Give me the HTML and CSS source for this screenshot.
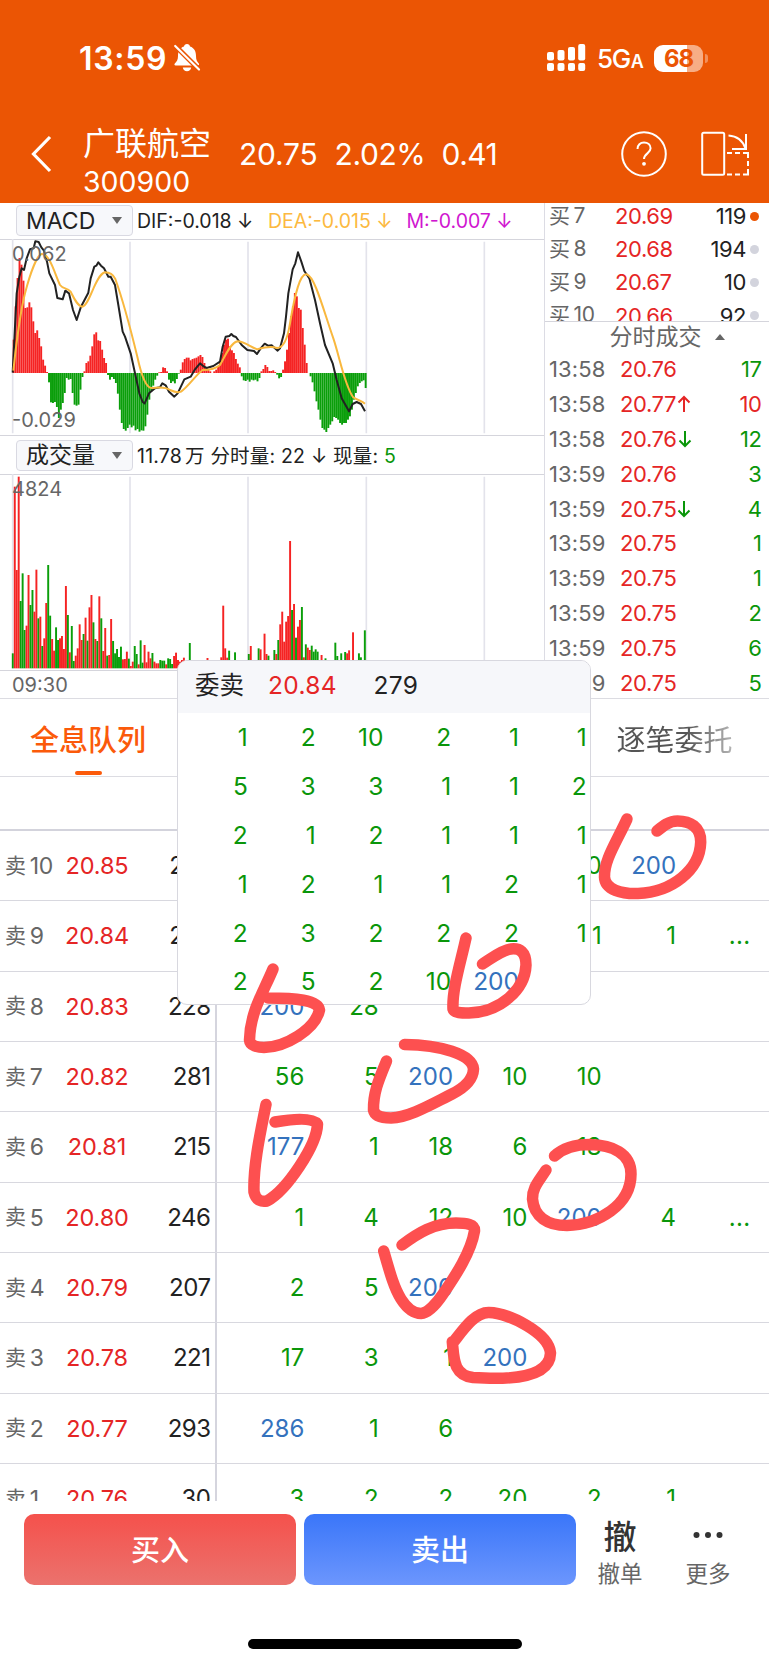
FILE: index.html
```html
<!DOCTYPE html>
<html lang="zh-CN">
<head>
<meta charset="utf-8">
<title>广联航空 300900</title>
<link rel="stylesheet" href="styles.css">
</head>
<body>
<div class="phone">
  <header class="header">
    <div class="status">
      <span class="clock">13:59</span>
      <svg class="bell" width="28" height="30" viewBox="0 0 28 30"><path fill="#fff" d="M14 1c1.700 0 2.800 1 3 2.500 4.300 1.300 6 5 6 9.500 0 4 1 5.500 2.800 7.500.8 1-.2 2-1 2H2.600c-1 0-1.600-1-.8-2C3.800 18.500 5 17 5 13c0-4.500 1.700-8.200 6-9.500C11.200 2 12.300 1 14 1z"/><path fill="#fff" d="M9.800 24.500h8.400c-.5 2.500-2 3.700-4.200 3.700s-3.700-1.200-4.200-3.700z"/><path d="M2.500 3 26 26.500" stroke="#eb5504" stroke-width="5"/><path d="M2.200 3 26 26.500" stroke="#fff" stroke-width="2.200" stroke-linecap="round"/></svg>
      <svg class="signal" width="39" height="28" viewBox="0 0 39 28" fill="#fff"><rect y="8" width="7" height="8.500" rx="2"/><rect x="10.500" y="6" width="7" height="10.500" rx="2"/><rect x="21" y="3" width="7" height="13.500" rx="2"/><rect x="31.200" width="7" height="16.500" rx="2"/><rect y="19" width="7" height="8" rx="2"/><rect x="10.500" y="19" width="7" height="8" rx="2"/><rect x="21" y="19" width="7" height="8" rx="2"/><rect x="31.200" y="19" width="7" height="8" rx="2"/></svg>
      <span class="net">5G<small>A</small></span>
      <span class="battery">68</span><i class="nub"></i>
    </div>
    <div class="titlebar">
      <svg class="back" width="22" height="38" viewBox="0 0 22 38"><path d="M20 2 3.500 19 20 36" fill="none" stroke="#fff" stroke-width="3.200"/></svg>
      <div class="stock"><span class="name">广联航空</span><span class="code">300900</span></div>
      <span class="quote price-now">20.75</span><span class="quote pct">2.02%</span><span class="quote chg">0.41</span>
      <svg class="help" width="46" height="46" viewBox="0 0 46 46" fill="none" stroke="#fff" stroke-width="2"><circle cx="23" cy="23" r="21.800"/><path d="M16.500 18c0-4.200 2.800-6.500 6.500-6.500s6.600 2.300 6.600 5.800c0 5-6.600 5.200-6.600 10.700"/><circle cx="23" cy="32.800" r="1.900" fill="#fff" stroke="none"/></svg>
      <svg class="rotate" width="48" height="46" viewBox="0 0 48 46" fill="none" stroke="#fff" stroke-width="2"><rect x="1.200" y="1.700" width="22" height="42" rx="1.500"/><path d="M27.500 4.500C35 5 41.500 9 44.500 17.500M45 3v15H31"/><path d="M26 22h5m3 0h5m3 0h5v5m0 3v5m0 3v5.500h-5m-3 0h-5m-3 0h-5"/></svg>
    </div>
  </header>

  <section class="market">
    <div class="charts">
      <div class="info">
        <span class="picker">MACD<i class="down"></i></span>
        <span class="dif">DIF:-0.018 ↓</span><span class="dea">DEA:-0.015 ↓</span><span class="m">M:-0.007 ↓</span>
      </div>
      <div class="plot macd">
        <svg width="544" height="197" viewBox="0 117 1632 591">
          <path class="grid" d="M38 117V700M390 125V700M744 125V700M1099 125V700M1453 125V700"/>
          <g id="hist"></g>
          <path class="dif-line" d="M38 518 44 400 50 280 58 230 65 205 72 210 80 175 90 148 101 145 106 124 116 126 124 142 132 152 141 185 148 220 165 255 172 294 188 298 196 272 207 280 219 330 230 360 243 320 265 278 272 235 283 200 289 197 295 187 303 197 312 205 325 230 332 230 345 255 355 315 368 395 375 410 392 460 405 520 418 580 428 606 434 610 447 580 465 565 480 562 487 550 497 556 507 575 523 590 533 580 553 538 572 530 585 508 600 490 612 500 620 504 640 498 660 485 668 440 677 410 688 408 694 402 700 408 708 411 725 435 742 450 762 453 771 462 782 445 794 431 804 437 815 436 833 452 840 445 852 400 858 350 865 280 878 208 886 190 894 157 904 185 913 213 928 235 945 300 960 370 975 435 998 490 1010 540 1025 595 1047 634 1058 612 1070 606 1083 612 1095 634"/>
          <path class="dea-line" d="M40 512C50 420 60 340 75 280 92 215 112 165 125 162 150 160 165 225 180 255 190 268 200 262 212 275 222 295 232 318 247 320 270 315 285 225 315 217 330 217 340 225 346 237 365 290 390 380 412 470 425 530 440 568 458 564 475 562 495 560 510 570 525 577 535 578 543 575 565 560 590 522 608 510 630 510 650 504 660 495 675 470 690 430 712 424 735 425 750 440 772 448 790 443 815 438 830 444 850 445 862 420 870 370 885 280 900 220 920 223 945 230 970 330 1000 415 1020 475 1035 560 1060 592 1075 602 1085 602 1095 611"/>
        </svg>
        <span class="scale top">0.062</span><span class="scale bottom">-0.029</span>
      </div>
      <div class="info second">
        <span class="picker">成交量<i class="down"></i></span>
        <span class="vol-info">11.78<b>万</b> 分时量: 22 ↓ 现量: <em>5</em></span>
      </div>
      <div class="plot volume">
        <svg width="544" height="196" viewBox="0 132 1632 588">
          <path class="grid" d="M38 132V715M390 140V715M744 140V715M1099 140V715M1453 140V715"/>
          <g id="bars"></g>
        </svg>
        <span class="scale top">4824</span>
      </div>
      <div class="axis">09:30</div>
    </div>
    <div class="depth">
      <div class="bids">
        <div class="bid"><span>买<u>7</u></span><b>20.69</b><em>119</em><i class="hot"></i></div>
        <div class="bid"><span>买<u>8</u></span><b>20.68</b><em>194</em><i></i></div>
        <div class="bid"><span>买<u>9</u></span><b>20.67</b><em>10</em><i></i></div>
        <div class="bid"><span>买<u>10</u></span><b>20.66</b><em>92</em><i></i></div>
      </div>
      <div class="trades-title">分时成交<i class="up"></i></div>
      <div class="trades">
        <div class="trade"><span>13:58</span><b>20.76</b><em>17</em></div>
        <div class="trade"><span>13:58</span><b>20.77<svg class="arr red" width="14" height="18" viewBox="0 0 14 18"><path d="M7 17V2M1.500 7.500 7 2l5.500 5.500"/></svg></b><em class="red">10</em></div>
        <div class="trade"><span>13:58</span><b>20.76<svg class="arr" width="14" height="18" viewBox="0 0 14 18"><path d="M7 1v15M1.500 10.500 7 16l5.500-5.500"/></svg></b><em>12</em></div>
        <div class="trade"><span>13:59</span><b>20.76</b><em>3</em></div>
        <div class="trade"><span>13:59</span><b>20.75<svg class="arr" width="14" height="18" viewBox="0 0 14 18"><path d="M7 1v15M1.500 10.500 7 16l5.500-5.500"/></svg></b><em>4</em></div>
        <div class="trade"><span>13:59</span><b>20.75</b><em>1</em></div>
        <div class="trade"><span>13:59</span><b>20.75</b><em>1</em></div>
        <div class="trade"><span>13:59</span><b>20.75</b><em>2</em></div>
        <div class="trade"><span>13:59</span><b>20.75</b><em>6</em></div>
        <div class="trade"><span>13:59</span><b>20.75</b><em>5</em></div>
      </div>
    </div>
  </section>

  <nav class="tabs"><span class="tab active">全息队列</span><span class="tab faded">逐笔委托</span></nav>
  <div class="spacer"></div>

  <section class="queue">
    <div class="row"><div class="side"><span>卖<u>10</u></span><b>20.85</b><em>279</em></div><div class="cells"><i></i><i></i><i></i><i></i><i>10</i><i class="big">200</i></div></div>
    <div class="row"><div class="side"><span>卖<u>9</u></span><b>20.84</b><em>279</em></div><div class="cells"><i></i><i></i><i></i><i></i><i>1</i><i>1</i><i class="more">...</i></div></div>
    <div class="row"><div class="side"><span>卖<u>8</u></span><b>20.83</b><em>228</em></div><div class="cells"><i class="big">200</i><i>28</i></div></div>
    <div class="row"><div class="side"><span>卖<u>7</u></span><b>20.82</b><em>281</em></div><div class="cells"><i>56</i><i>5</i><i class="big">200</i><i>10</i><i>10</i></div></div>
    <div class="row"><div class="side"><span>卖<u>6</u></span><b>20.81</b><em>215</em></div><div class="cells"><i class="big">177</i><i>1</i><i>18</i><i>6</i><i>18</i></div></div>
    <div class="row"><div class="side"><span>卖<u>5</u></span><b>20.80</b><em>246</em></div><div class="cells"><i>1</i><i>4</i><i>12</i><i>10</i><i class="big">200</i><i>4</i><i class="more">...</i></div></div>
    <div class="row"><div class="side"><span>卖<u>4</u></span><b>20.79</b><em>207</em></div><div class="cells"><i>2</i><i>5</i><i class="big">200</i></div></div>
    <div class="row"><div class="side"><span>卖<u>3</u></span><b>20.78</b><em>221</em></div><div class="cells"><i>17</i><i>3</i><i>1</i><i class="big">200</i></div></div>
    <div class="row"><div class="side"><span>卖<u>2</u></span><b>20.77</b><em>293</em></div><div class="cells"><i class="big">286</i><i>1</i><i>6</i></div></div>
    <div class="row"><div class="side"><span>卖<u>1</u></span><b>20.76</b><em>30</em></div><div class="cells"><i>3</i><i>2</i><i>2</i><i>20</i><i>2</i><i>1</i></div></div>
  </section>

  <footer class="footer">
    <div class="btn buy">买入</div>
    <div class="btn sell">卖出</div>
    <div class="action"><span class="glyph">撤</span><span class="cap">撤单</span></div>
    <div class="action last"><span class="glyph"><svg width="30" height="8" viewBox="0 0 30 8"><circle cx="3.500" cy="4" r="3"/><circle cx="15" cy="4" r="3"/><circle cx="26.500" cy="4" r="3"/></svg></span><span class="cap">更多</span></div>
    <div class="home"></div>
  </footer>

  <aside class="popup">
    <div class="popup-head"><span>委卖</span><b>20.84</b><em>279</em></div>
    <div class="popup-grid">
      <i>1</i><i>2</i><i>10</i><i>2</i><i>1</i><i>1</i>
      <i>5</i><i>3</i><i>3</i><i>1</i><i>1</i><i>2</i>
      <i>2</i><i>1</i><i>2</i><i>1</i><i>1</i><i>1</i>
      <i>1</i><i>2</i><i>1</i><i>1</i><i>2</i><i>1</i>
      <i>2</i><i>3</i><i>2</i><i>2</i><i>2</i><i>1</i>
      <i>2</i><i>5</i><i>2</i><i>10</i><i class="big">200</i><i></i>
    </div>
  </aside>

  <svg class="marks" width="769" height="1665" viewBox="0 0 769 1665">
    <path d="M627 819C616 843 604 860 604.500 877 605 890 622 894 638 893.500 672 892 700 870 700.700 842 701 827 690 821 677.500 821 669 821 663 826 657 831"/>
    <path d="M466 938C460 965 452 990 453 1009 454 1013 462 1013 469 1013 500 1012 525 990 526 965 526 952 520 948 511 949 502 950 492 958 482.500 964"/>
    <path d="M273 969C264 991 250 1012 249.500 1040 250 1046 258 1047.500 264 1047.500 285 1047 315 1030 319.500 1010 318 1000 295 998 268 998"/>
    <path d="M386.500 1061C380 1077 373 1092 373.500 1110 375 1117 384 1118 391 1118 410 1117 430 1105 452 1094 464 1088 473 1080 473.500 1069 472 1054 440 1045 404.500 1044.500"/>
    <path d="M266 1104.500C261 1130 253 1165 254 1192 256 1201 262 1202 267 1201 287 1190 317 1145 317.500 1124 312 1117 292 1119 275 1122"/>
    <path d="M546 1170C539 1181 532 1188 532.500 1199 534 1217 548 1225.500 567 1225.500 598 1225 631 1205 631 1174 631 1153 612 1145 590 1144.500 575 1144.500 562 1149 554.500 1156"/>
    <path d="M383.700 1251C390 1273 394 1288 401 1299 408 1310 414 1313.500 421 1313.500 428 1313 437 1303 443 1294 456 1275 471 1252 474.500 1231 475 1224 466 1223 456 1223 434 1223 418 1233 402 1245"/>
    <path d="M452.300 1341.700C454 1358 453 1375 473 1377.500L490 1378.300C525 1379 550 1373 550.500 1353 549 1333 509 1313 489 1312.500 475 1312 463 1330 453.500 1342"/>
  </svg>
</div>
<script src="charts.js"></script>
</body>
</html>
```
FILE: styles.css
```css
* { box-sizing: border-box; }
body { margin: 0; background: #fff; }
.phone { position: relative; width: 769px; height: 1665px; overflow: hidden; display: flex; flex-direction: column; font-family: Inter, "Noto Sans CJK SC", sans-serif; color: #222; background: #fff; }
b, em, i, u { font-style: normal; font-weight: 400; text-decoration: none; }
svg { display: block; flex: none; }

.header { height: 203px; flex: none; background: #eb5504; color: #fff; display: flex; flex-direction: column; }
.status { height: 104px; padding: 12px 0 0 79px; display: flex; align-items: center; white-space: nowrap; }
.clock { width: 94px; font-size: 32px; font-weight: 600; letter-spacing: .7px; }
.bell { margin-right: 346px; }
.signal { margin-right: 11px; }
.net { width: 57px; font-size: 26px; font-weight: 500; letter-spacing: -1.4px; }
.net small { font-size: 18px; font-weight: 600; margin-left: 1px; }
.battery { width: 49px; height: 27px; border-radius: 9px; background: linear-gradient(90deg, #fff 68%, #f7ad85 68%); color: #eb5504; font-size: 24px; font-weight: 700; line-height: 27px; text-align: center; letter-spacing: -1px; }
.nub { width: 3px; height: 9px; margin-left: 2px; border-radius: 0 4px 4px 0; background: #f2905c; }
.titlebar { height: 99px; display: flex; align-items: center; padding: 1px 0 0 30px; white-space: nowrap; }
.back { margin-right: 31px; }
.stock { width: 156px; display: flex; flex-direction: column; }
.name { font-size: 32px; line-height: 40px; margin-top: 15px; }
.code { font-size: 28.500px; line-height: 36px; }
.quote { font-size: 30px; }
.price-now { width: 95.500px; letter-spacing: -.2px; }
.pct { width: 107px; letter-spacing: -.4px; }
.chg { width: 179.500px; letter-spacing: -.5px; }
.help { margin-right: 34px; }

.market { height: 496px; flex: none; display: flex; border-bottom: 1px solid #dcdce2; }
.charts { width: 544.500px; flex: none; border-right: 1.500px solid #dcdce4; display: flex; flex-direction: column; }
.info { height: 36px; flex: none; display: flex; align-items: center; padding: 0 0 1px 16px; font-size: 19.500px; letter-spacing: 0; white-space: nowrap; }
.info.second { height: 38px; padding-bottom: 0; }
.picker { width: 117px; height: 31px; margin-right: 4px; padding: 0 10px 0 9px; display: flex; align-items: center; justify-content: space-between; border: 1px solid #d9d9e2; border-radius: 4px; background: #f7f8fb; font-size: 23px; letter-spacing: 0; }
.second .picker { line-height: 27px; }
.down { border: 5px solid transparent; border-top: 7px solid #666; border-bottom: 0; }
.dif { width: 131px; }
.dea { width: 138.500px; color: #fcb940; }
.m { color: #d016d0; }
.vol-info { letter-spacing: .2px; margin-top: -2px; }
.vol-info b { margin-left: 3px; }
.vol-info em { color: #0a960a; }
.plot { position: relative; flex: none; border-top: 1px solid #d5d5dc; border-bottom: 1px solid #d5d5dc; }
.plot svg { margin-top: -1px; }
.macd { height: 197px; }
.volume { height: 197px; }
.grid { fill: none; stroke: #e3e3eb; stroke-width: 5; }
.dif-line { fill: none; stroke: #222; stroke-width: 6; stroke-linejoin: round; }
.dea-line { fill: none; stroke: #f9b83e; stroke-width: 6; }
.scale { position: absolute; left: 12px; color: #666; font-size: 20px; line-height: 24px; }
.scale.top { top: 2px; }
.scale.bottom { bottom: 3px; }
.axis { padding-left: 12px; font-size: 20px; line-height: 28px; color: #666; }

.depth { width: 224px; display: flex; flex-direction: column; font-size: 22px; }
.bids { height: 119px; flex: none; overflow: hidden; border-bottom: 1.500px solid #d5d5dc; }
.bid { height: 33.200px; display: grid; grid-template-columns: 66px 62px 69px 16px; padding-left: 4.500px; align-items: center; letter-spacing: -.4px; white-space: nowrap; }
.bid:first-child { margin-top: -3.500px; }
.bid span, .trade span { color: #666; }
.bid span { font-size: 21px; line-height: 24px; margin-top: -1px; }
.bid u { margin-left: 4px; }
.bid b, .trade b { color: #e52525; }
.bid em { text-align: right; }
.bid i { width: 9px; height: 9px; margin-left: 4px; border-radius: 50%; background: #d3d4dd; }
.bid .hot { background: #eb5504; }
.trades-title { height: 30px; flex: none; padding: 0 0 0 65px; display: flex; align-items: center; gap: 13px; font-size: 23px; line-height: 26px; color: #666; }
.up { border: 5.500px solid transparent; border-bottom: 6px solid #666; border-top: 0; }
.trade { height: 34.800px; display: grid; grid-template-columns: 71px 90px 51.500px; padding-left: 4.500px; align-items: center; letter-spacing: -.4px; white-space: nowrap; }
.trade span { letter-spacing: .1px; }
.trade b { display: flex; align-items: center; }
.trade em { text-align: right; color: #0a960a; }
.trade em.red { color: #e52525; }
.arr { margin-left: 1px; fill: none; stroke: #0a960a; stroke-width: 2; }
.arr.red { stroke: #e52525; }

.tabs { height: 78px; flex: none; display: flex; justify-content: space-between; padding: 0 36.500px 0 30px; border-bottom: 1px solid #dcdce2; font-size: 29px; line-height: 83px; }
.tab.active { color: #fb5a0a; font-weight: 500; position: relative; }
.tab.active::after { content: ""; position: absolute; left: 45px; top: 72px; width: 27px; height: 4px; border-radius: 2px; background: #fb5a0a; }
.faded { height: 77px; color: transparent; background: linear-gradient(90deg, #555 60%, #b5b5b5); background-clip: text; -webkit-background-clip: text; }
.spacer { height: 52px; flex: none; }

.queue { height: 672px; flex: none; overflow: hidden; border-top: 2px solid #d3d3dc; font-size: 24px; }
.row { height: 70.330px; display: flex; border-bottom: 1.500px solid #d8d8df; }
.side { width: 217px; display: grid; grid-template-columns: 61px 72px 72.500px; padding-left: 5px; align-items: center; border-right: 2px solid #d5d5de; letter-spacing: -.5px; white-space: nowrap; }
.side span { color: #666; font-size: 21px; line-height: 28px; display: flex; align-items: center; letter-spacing: -.3px; }
.side u { font-size: 23px; margin: 1px 0 0 4px; }
.side b { color: #e52525; font-size: 23.500px; text-align: center; margin-left: -10px; letter-spacing: -.1px; }
.side em { text-align: right; }
.cells { display: grid; grid-template-columns: repeat(7, 74.350px); padding-left: 13px; align-items: center; color: #0a960a; }
.cells i, .popup-grid i { text-align: right; }
.big { color: #3472bd; }
.more { letter-spacing: .3px; }

.footer { flex: 1; position: relative; z-index: 1; display: flex; align-items: flex-start; padding: 13px 0 0 24px; background: #fff; }
.btn { width: 272px; height: 71px; margin-right: 8px; border-radius: 10px; color: #fff; font-size: 29px; font-weight: 500; line-height: 74px; text-align: center; }
.buy { background: linear-gradient(#f5514c, #eb726d); }
.sell { background: linear-gradient(#3a76f9, #6c96fd); }
.action { width: 88px; display: flex; flex-direction: column; align-items: center; margin-left: -8px; }
.action.last { margin-left: 0; }
.glyph { height: 42px; display: flex; align-items: center; font-size: 33px; font-weight: 500; color: #333; fill: #333; }
.cap { font-size: 22.500px; line-height: 36px; color: #666; }
.home { position: absolute; left: 248px; bottom: 16px; width: 274px; height: 10px; border-radius: 5px; background: #000; }

.popup { position: absolute; z-index: 2; left: 177px; top: 659.500px; width: 414px; height: 345px; border: 1px solid #d8d8df; border-radius: 10px; background: #fff; overflow: hidden; font-size: 24.500px; }
.popup-head { height: 52px; padding: 0 0 4px 17px; display: flex; align-items: center; background: #f6f7fa; }
.popup-head span { width: 73px; font-size: 24.500px; line-height: 28px; }
.popup-head b { width: 105.500px; color: #e52525; letter-spacing: .3px; }
.popup-head em { letter-spacing: .4px; }
.popup-grid { display: grid; grid-template-columns: repeat(6, 67.800px); grid-auto-rows: 48.900px; margin-left: 2px; align-items: center; color: #0a960a; }
.marks { position: absolute; z-index: 3; left: 0; top: 0; fill: none; stroke: #fd5050; stroke-width: 11.500; stroke-linecap: round; stroke-linejoin: round; }
```
FILE: charts.js
```js
const RED = '#f52323', GREEN = '#0a9e0a';
const STEP = 5.9, START = 38;

const macd = [100,200,285,345,325,277,195,197,212,197,155,120,128,105,80,40,22,3,-28,-88,-90,-87,-102,-135,-110,-90,-60,-15,-20,-18,-60,-95,-98,-95,-50,-12,5,30,35,52,80,116,122,98,96,70,45,30,-6,-20,-12,-18,-30,-62,-110,-150,-168,-173,-165,-155,-163,-158,-172,-168,-176,-172,-173,-160,-125,-80,-55,-38,-20,-8,2,3,17,15,5,-20,-30,-25,-31,-18,-2,10,32,42,46,46,38,42,44,46,50,54,48,30,18,10,5,0,5,10,20,35,60,85,100,103,80,68,60,42,28,17,-10,-22,-24,-20,-26,-20,-22,-20,-25,-15,5,12,24,18,6,6,8,3,-5,-16,-12,10,35,70,120,170,200,240,230,195,190,135,85,30,0,-10,-28,-55,-85,-110,-140,-165,-170,-177,-165,-155,-145,-132,-135,-140,-150,-155,-150,-150,-140,-130,-110,-80,-60,-40,-30,-25,-22,-45];

// minute index, positive for a rising minute and negative for a falling one
const first = [-45,545,295,575,-202,-285,-115,128,280,-190,-235,170,296,-150,155,-67,90,196,-310,-158,88,53,-123,-85,90,97,58,247,-160,48,-127,-22,38,60,132,85,-103,152,-83,183,220,-138,88,-82,216,-150,52,121,-38,40,148,-82,-45,-58,-34,-65,27,28,50,-29,7,20,-67,-43,12,-84,-17,70,18,50,30,-46,20,15,15,-25,-23,-23,12,-30,-28,-13,37,47,25,20,25,32];
const later = {90:-76,99:31,106:33,107:188,108:60,109:32,110:-53,113:-48,120:-43,121:67,125:-60,126:57,128:104,129:43,130:-38,133:-55,134:43,135:-85,136:132,137:170,138:80,139:140,140:157,141:382,142:-175,143:193,144:-92,145:125,146:145,147:-184,148:33,149:-72,150:62,151:55,152:-68,153:-50,154:-57,155:-50,157:40,159:-30,164:-77,165:-37,167:-45,169:-49,170:45,171:54,173:108,176:-45,177:-33,179:-114};

function bar(i, value, base, flip) {
  const h = Math.abs(value);
  const y = flip && value < 0 ? base : base - h;
  return `<rect x="${(START + i * STEP - (flip ? 0 : 2.5)).toFixed(1)}" y="${y}" width="5.8" height="${h}" fill="${value < 0 ? GREEN : RED}"/>`;
}

document.getElementById('hist').innerHTML = macd.map((v, i) => bar(i, v, 519, true)).join('');
document.getElementById('bars').innerHTML =
  first.map((v, i) => bar(i, v, 715, false)).join('') +
  Object.entries(later).map(([i, v]) => bar(+i, v, 715, false)).join('');
```
